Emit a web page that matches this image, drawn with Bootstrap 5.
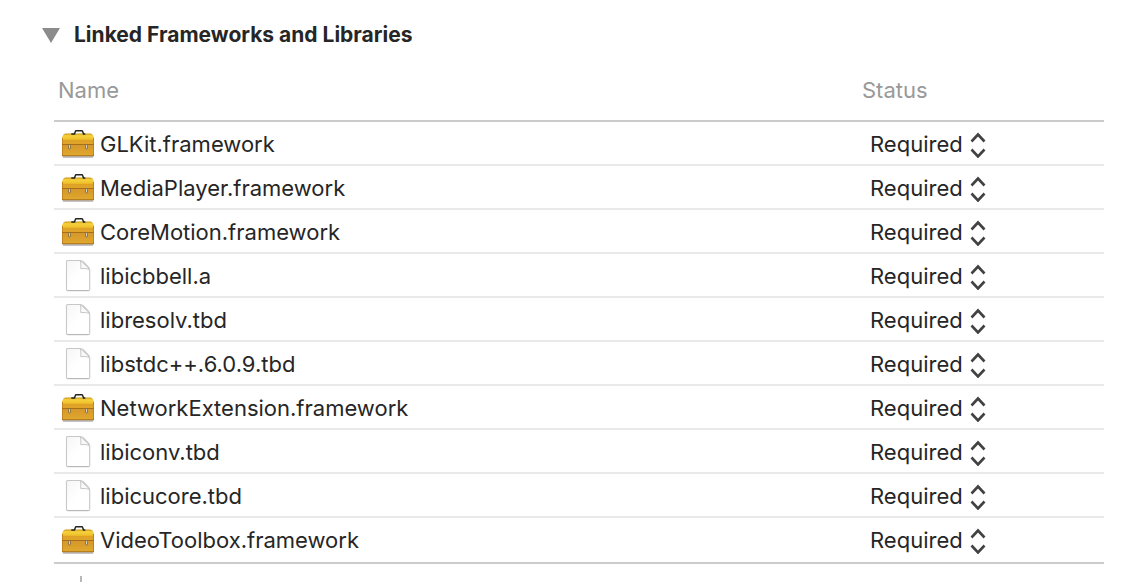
<!DOCTYPE html>
<html lang="en">
<head>
<meta charset="utf-8">
<meta name="viewport" content="width=device-width, initial-scale=1">
<title>Linked Frameworks and Libraries</title>
<link href="https://cdn.jsdelivr.net/npm/bootstrap@5.3.0/dist/css/bootstrap.min.css" rel="stylesheet">
<style>
  body { font-family: Inter, "Liberation Sans", sans-serif; font-size: 22px; line-height: 28px; color: #262626; background: #fff; }
  .panel { padding: 21px 30px 0 42px; }
  .disclosure { gap: 14px; color: #262626; font-size: 21px; font-weight: 700; line-height: 28px; }
  .lib-wrap { padding-left: 12px; }
  .lib-table { border-collapse: separate; border-spacing: 0; table-layout: fixed; color: #262626; }
  .lib-table th { height: 73px; padding: 11px 4px 0; border-bottom: 2px solid #cbcbcb; color: #999; font-weight: 400; vertical-align: middle; }
  .lib-table td { height: 44px; padding: 2px 8px 0; border-bottom: 2px solid #e9e9e9; vertical-align: middle; }
  .lib-table tr:last-child td { height: 46px; padding-bottom: 2px; border-bottom-color: #cbcbcb; }
  .status-col { width: 246px; }
  .lib-table td:last-child { padding-left: 12px; }
  .lib-name { gap: 6px; }
  .lib-icon { width: 32px; height: 34px; }
  .status-pick { appearance: none; display: block; height: 28px; padding: 0 23px 0 0; border: 0; font: inherit; color: inherit;
    background: transparent url("data:image/svg+xml,%3Csvg xmlns='http://www.w3.org/2000/svg' width='16' height='26' fill='none' stroke='%23424242' stroke-width='2.6'%3E%3Cpath d='M1.5 9.500 8 2.500l6.500 7M1.500 17.500l6.500 7 6.500-7'/%3E%3C/svg%3E") no-repeat right bottom; }
  .toolbar-edge { width: 2px; height: 6px; margin: 12px 0 0 26px; background: #b8b8b8; }
</style>
</head>
<body>
<svg width="0" height="0" class="position-absolute" aria-hidden="true">
  <defs>
    <linearGradient id="lid" x1="0" y1="0" x2="0" y2="1"><stop offset="0" stop-color="#c99418"/><stop offset=".2" stop-color="#f6d23f"/><stop offset=".5" stop-color="#efc02b"/><stop offset=".6" stop-color="#dea126"/><stop offset="1" stop-color="#e0a62b"/></linearGradient>
    <linearGradient id="base" x1="0" y1="0" x2="0" y2="1"><stop offset="0" stop-color="#d6962a"/><stop offset="1" stop-color="#dfa92d"/></linearGradient>
    <linearGradient id="paper" x1="0" y1="0" x2="1" y2="1"><stop offset="0" stop-color="#f6f6f6"/><stop offset=".5" stop-color="#fff"/></linearGradient>
    <symbol id="toolbox" viewBox="0 0 32 34">
      <path d="M1 30h30" stroke="#a9adb5" stroke-width="1.400"/>
      <path d="M0 18V11q0-2 1.500-3.500Q2.300 6.500 4 6.500h24q1.700 0 2.500 1Q32 9 32 11v7z" fill="url(#lid)"/>
      <path d="M0 17.500h32V29H0z" fill="url(#base)"/>
      <path d="M.5 11v18M31.500 11v18" stroke="#c08420"/>
      <path d="M0 28.800h32" stroke="#a66d18"/>
      <path d="M0 17.500h32" stroke="#a0691a" stroke-width=".9"/>
      <path d="M9.300 6.900h3.200l.8-2.400q.2-.7 1-.7h5.400q.8 0 1 .7l.8 2.400h1.800" fill="none" stroke="#23231f" stroke-width="1.500"/>
      <g fill="#d5d5cd" stroke="#6b572c" stroke-width=".7"><rect x="6.500" y="17.500" width="2" height="4.500" rx="1"/><rect x="23.500" y="17.500" width="2" height="4.500" rx="1"/></g>
    </symbol>
    <symbol id="document" viewBox="0 0 32 34">
      <path d="M5.500 1.500h13q1.500 0 3 1.500l5 5q1.200 1.500 1.200 3v19.500q0 1-1 1H5.500q-1 0-1-1v-28q0-1 1-1z" fill="url(#paper)" stroke="#c8c8c8" stroke-width="1.100"/>
      <path d="M5.500 31.700h21" stroke="#b4b4b4" stroke-width="1"/>
      <path d="M18.300 2q.8 2 .5 7.500 5.500-.3 8.300.8-1-2-4-4.300-3-3.200-4.800-4z" fill="#fafafa" stroke="#c8c8c8"/>
    </symbol>
  </defs>
</svg>

<main class="panel">
  <h2 class="m-0 d-flex">
    <button type="button" class="disclosure btn p-0 border-0 d-flex align-items-center" aria-expanded="true" aria-controls="libraries">
      <svg width="18" height="15" viewBox="0 0 18 15" fill="#8c8c8c" aria-hidden="true"><path d="M0 0h18L9 15z"/></svg>
      <span>Linked Frameworks and Libraries</span>
    </button>
  </h2>

  <div id="libraries" class="lib-wrap">
    <table class="lib-table w-100">
      <thead>
        <tr><th scope="col">Name</th><th scope="col" class="status-col">Status</th></tr>
      </thead>
      <tbody>
        <tr><td><div class="lib-name d-flex align-items-center"><svg class="lib-icon" aria-hidden="true"><use href="#toolbox"/></svg><span>GLKit.framework</span></div></td><td><select class="status-pick" aria-label="Status of GLKit.framework"><option>Required</option></select></td></tr>
        <tr><td><div class="lib-name d-flex align-items-center"><svg class="lib-icon" aria-hidden="true"><use href="#toolbox"/></svg><span>MediaPlayer.framework</span></div></td><td><select class="status-pick" aria-label="Status of MediaPlayer.framework"><option>Required</option></select></td></tr>
        <tr><td><div class="lib-name d-flex align-items-center"><svg class="lib-icon" aria-hidden="true"><use href="#toolbox"/></svg><span>CoreMotion.framework</span></div></td><td><select class="status-pick" aria-label="Status of CoreMotion.framework"><option>Required</option></select></td></tr>
        <tr><td><div class="lib-name d-flex align-items-center"><svg class="lib-icon" aria-hidden="true"><use href="#document"/></svg><span>libicbbell.a</span></div></td><td><select class="status-pick" aria-label="Status of libicbbell.a"><option>Required</option></select></td></tr>
        <tr><td><div class="lib-name d-flex align-items-center"><svg class="lib-icon" aria-hidden="true"><use href="#document"/></svg><span>libresolv.tbd</span></div></td><td><select class="status-pick" aria-label="Status of libresolv.tbd"><option>Required</option></select></td></tr>
        <tr><td><div class="lib-name d-flex align-items-center"><svg class="lib-icon" aria-hidden="true"><use href="#document"/></svg><span>libstdc++.6.0.9.tbd</span></div></td><td><select class="status-pick" aria-label="Status of libstdc++.6.0.9.tbd"><option>Required</option></select></td></tr>
        <tr><td><div class="lib-name d-flex align-items-center"><svg class="lib-icon" aria-hidden="true"><use href="#toolbox"/></svg><span>NetworkExtension.framework</span></div></td><td><select class="status-pick" aria-label="Status of NetworkExtension.framework"><option>Required</option></select></td></tr>
        <tr><td><div class="lib-name d-flex align-items-center"><svg class="lib-icon" aria-hidden="true"><use href="#document"/></svg><span>libiconv.tbd</span></div></td><td><select class="status-pick" aria-label="Status of libiconv.tbd"><option>Required</option></select></td></tr>
        <tr><td><div class="lib-name d-flex align-items-center"><svg class="lib-icon" aria-hidden="true"><use href="#document"/></svg><span>libicucore.tbd</span></div></td><td><select class="status-pick" aria-label="Status of libicucore.tbd"><option>Required</option></select></td></tr>
        <tr><td><div class="lib-name d-flex align-items-center"><svg class="lib-icon" aria-hidden="true"><use href="#toolbox"/></svg><span>VideoToolbox.framework</span></div></td><td><select class="status-pick" aria-label="Status of VideoToolbox.framework"><option>Required</option></select></td></tr>
      </tbody>
    </table>
    <div class="toolbar-edge"></div>
  </div>
</main>
<script src="https://cdn.jsdelivr.net/npm/bootstrap@5.3.0/dist/js/bootstrap.bundle.min.js"></script>
</body>
</html>
